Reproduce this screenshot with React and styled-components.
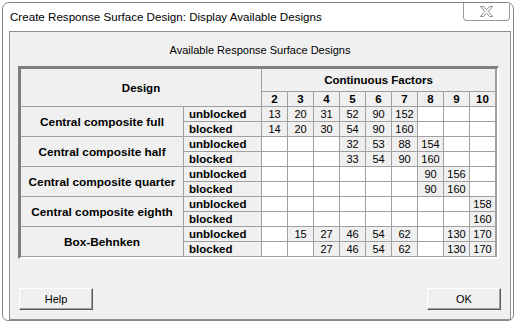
import styled, { createGlobalStyle } from 'styled-components'

const GlobalStyle = createGlobalStyle`
    body {
        margin: 0;
        background: #ffffff;
        font-family: "Liberation Sans", Arial, sans-serif;
    }
`

const factors = [2, 3, 4, 5, 6, 7, 8, 9, 10]

const designs = [
    {
        name: 'Central composite full',
        unblocked: { 2: 13, 3: 20, 4: 31, 5: 52, 6: 90, 7: 152 },
        blocked: { 2: 14, 3: 20, 4: 30, 5: 54, 6: 90, 7: 160 },
    },
    {
        name: 'Central composite half',
        unblocked: { 5: 32, 6: 53, 7: 88, 8: 154 },
        blocked: { 5: 33, 6: 54, 7: 90, 8: 160 },
    },
    {
        name: 'Central composite quarter',
        unblocked: { 8: 90, 9: 156 },
        blocked: { 8: 90, 9: 160 },
    },
    {
        name: 'Central composite eighth',
        unblocked: { 10: 158 },
        blocked: { 10: 160 },
    },
    {
        name: 'Box-Behnken',
        unblocked: { 3: 15, 4: 27, 5: 46, 6: 54, 7: 62, 9: 130, 10: 170 },
        blocked: { 4: 27, 5: 46, 6: 54, 7: 62, 9: 130, 10: 170 },
    },
]

const CloseIcon = () => (
    <svg width="13" height="11" viewBox="0 0 13 11">
        <polygon
            points="0.5,0.5 3.5,0.5 6.5,3.8 9.5,0.5 12.5,0.5 8.3,5.5 12.5,10.5 9.5,10.5 6.5,7.2 3.5,10.5 0.5,10.5 4.7,5.5"
            fill="#ffffff"
            stroke="#8c8c8c"
            strokeWidth="1"
        />
    </svg>
)

const App = () => {
    return (
        <>
            <GlobalStyle />
            <Ventana>
                <BarraTitulo>
                    <span>Create Response Surface Design: Display Available Designs</span>
                    <BotonCerrar><CloseIcon /></BotonCerrar>
                </BarraTitulo>
                <Cliente>
                    <Leyenda>Available Response Surface Designs</Leyenda>
                    <Tabla>
                        <Cabecera $span="1 / 3" $rows="1 / 3">Design</Cabecera>
                        <Cabecera $span="3 / 12">Continuous Factors</Cabecera>
                        {factors.map(f => (
                            <Cabecera key={f}>{f}</Cabecera>
                        ))}
                        {designs.map(d => (
                            <Grupo key={d.name} d={d} />
                        ))}
                    </Tabla>
                    <Pie>
                        <Boton>Help</Boton>
                        <Boton>OK</Boton>
                    </Pie>
                </Cliente>
            </Ventana>
        </>
    )
}

const Grupo = ({ d }) => (
    <>
        <Nombre>{d.name}</Nombre>
        {['unblocked', 'blocked'].map(tipo => (
            <Fila key={tipo}>
                <Tipo>{tipo}</Tipo>
                {factors.map(f => (
                    <Valor key={f} $lleno={d[tipo][f] !== undefined}>
                        {d[tipo][f]}
                    </Valor>
                ))}
            </Fila>
        ))}
    </>
)

export default App


const Ventana = styled.div`
    margin: 2px 0 0 2px;
    width: 510px;
    height: 317px;
    border: 1px solid #858585;
    border-radius: 7px 7px 6px 6px;
    background: #ffffff;
    display: flex;
    flex-direction: column;
    box-sizing: content-box;
`

const BarraTitulo = styled.div`
    height: 28px;
    display: flex;
    justify-content: space-between;
    align-items: flex-start;
    padding-left: 7px;
    span {
        font-size: 11.6px;
        color: #000;
        line-height: 28px;
    }
`

const BotonCerrar = styled.div`
    width: 45px;
    height: 17px;
    margin-right: 3px;
    border: 1px solid #9a9a9a;
    border-top: none;
    border-radius: 0 0 4px 4px;
    display: flex;
    align-items: center;
    justify-content: center;
    background: #ffffff;
`

const Cliente = styled.div`
    margin: 0 2px 0 6px;
    height: 282px;
    border: 1px solid #8f8f8f;
    background: #f0f0f0;
    display: flex;
    flex-direction: column;
    padding-top: 11px;
    box-sizing: content-box;
`

const Leyenda = styled.div`
    text-align: center;
    font-size: 11px;
    line-height: 14px;
    color: #000;
`

const Tabla = styled.div`
    margin: 9px 0 0 8px;
    width: 475px;
    display: grid;
    grid-template-columns: 162px 77px repeat(9, 25px);
    grid-template-rows: 22px 14px repeat(10, 14px);
    gap: 1px;
    padding: 0 1px 1px 0;
    background: #a0a0a0;
    border-top: 3px solid #7e7e7e;
    border-left: 3px solid #7e7e7e;
    border-right: 2px solid #ffffff;
    border-bottom: 2px solid #ffffff;
    font-size: 11px;
    color: #000;
`

const Celda = styled.div`
    display: flex;
    align-items: center;
    background: #f0f0f0;
    line-height: 14px;
    white-space: nowrap;
    overflow: hidden;
`

const Cabecera = styled(Celda)`
    justify-content: center;
    font-weight: bold;
    font-size: 11.5px;
    grid-column: ${p => p.$span || 'auto'};
    grid-row: ${p => p.$rows || 'auto'};
`

const Nombre = styled(Celda)`
    grid-column: 1;
    grid-row: span 2;
    justify-content: center;
    font-weight: bold;
    font-size: 11.8px;
`

const Fila = styled.div`
    display: contents;
`

const Tipo = styled(Celda)`
    grid-column: 2;
    font-weight: bold;
    font-size: 11.5px;
    padding-left: 5px;
`

const Valor = styled(Celda)`
    justify-content: center;
    background: ${p => (p.$lleno ? '#f0f0f0' : '#ffffff')};
`

const Pie = styled.div`
    margin-top: auto;
    display: flex;
    justify-content: space-between;
    padding: 0 9px 9px 9px;
`

const Boton = styled.div`
    width: 72px;
    height: 20px;
    box-sizing: content-box;
    border: 1px solid;
    border-color: #ffffff #5a5a5a #5a5a5a #ffffff;
    box-shadow: inset -1px -1px 0 #a0a0a0;
    background: #f0f0f0;
    display: flex;
    align-items: center;
    justify-content: center;
    font-size: 11px;
    color: #000;
`
